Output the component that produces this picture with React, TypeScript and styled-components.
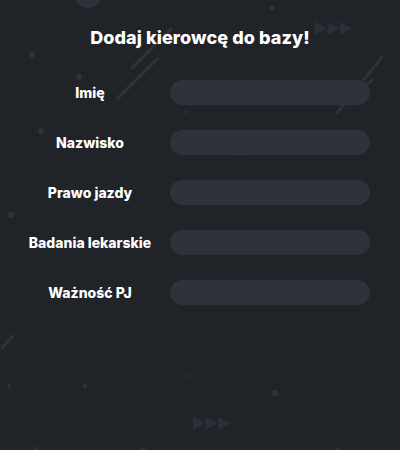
import React from "react";
import styled, { createGlobalStyle } from "styled-components";

const Global = createGlobalStyle`
  html, body { margin: 0; padding: 0; background: #202327; }
  body { font-family: Inter, "Noto Sans", sans-serif; }
`;

const Page = styled.div`
  position: relative;
  width: 400px;
  height: 450px;
  overflow: hidden;
  background: #202327;
  display: flex;
  flex-direction: column;
  align-items: stretch;
`;

const Backdrop = styled.svg`
  position: absolute;
  inset: 0;
  width: 400px;
  height: 450px;
  z-index: 0;
`;

const Title = styled.h1`
  position: relative;
  z-index: 1;
  margin: 27px 0 0;
  text-align: center;
  color: #ffffff;
  font-size: 18px;
  font-weight: 800;
  line-height: 22px;
  letter-spacing: 0.1px;
`;

const Form = styled.form`
  position: relative;
  z-index: 1;
  margin: 31px 0 0 10px;
  display: flex;
  flex-direction: column;
  gap: 25px;
`;

const Row = styled.label`
  display: grid;
  grid-template-columns: 160px 200px;
  align-items: center;
  height: 25px;
`;

const LabelText = styled.span`
  color: #ffffff;
  font-size: 14px;
  font-weight: 800;
  text-align: center;
  white-space: nowrap;
`;

const Input = styled.input`
  box-sizing: border-box;
  width: 200px;
  height: 25px;
  border: none;
  outline: none;
  border-radius: 13px;
  background: #2e333b;
  color: #fff;
  padding: 0 12px;
  font: inherit;
`;

const fields = ["Imię", "Nazwisko", "Prawo jazdy", "Badania lekarskie", "Ważność PJ"];

const dots: [number, number, number][] = [
  [88, -5, 13],
  [272, 8, 3],
  [32, 55, 3],
  [79, 77, 3],
  [186, 112, 1.5],
  [204, 102, 3],
  [41, 131, 3],
  [278, 128, 1],
  [240, 153, 3],
  [11, 215, 3],
  [9, 386, 2],
  [85, 386, 2.5],
  [187, 376, 1.5],
  [275, 393, 3],
  [362, 418, 1],
  [143, 452, 4],
  [338, 452, 4],
];

const lines: [number, number, number, number][] = [
  [132, 68, 171, 29],
  [118, 98, 158, 58],
  [337, 113, 382, 57],
  [353, 97, 372, 80],
  [2, 348, 13, 336],
];

const Triangles = ({ x, y }: { x: number; y: number }) => (
  <g fill="#2b2f37">
    {[0, 12.5, 25].map((d) => (
      <polygon key={d} points={`${x + d},${y} ${x + d + 12},${y + 6.5} ${x + d},${y + 13}`} />
    ))}
  </g>
);

export default function App() {
  return (
    <>
      <Global />
      <Page>
        <Backdrop viewBox="0 0 400 450">
          {dots.map(([cx, cy, r], i) => (
            <circle key={i} cx={cx} cy={cy} r={r} fill="#2e333b" />
          ))}
          {lines.map(([x1, y1, x2, y2], i) => (
            <line key={i} x1={x1} y1={y1} x2={x2} y2={y2} stroke="#2e333b" strokeWidth={3} strokeLinecap="round" />
          ))}
          <Triangles x={315} y={22} />
          <Triangles x={193} y={417} />
          <polygon points="38,446 32,449 38,452" fill="#2b2f37" />
        </Backdrop>
        <Title>Dodaj kierowcę do bazy!</Title>
        <Form>
          {fields.map((f) => (
            <Row key={f}>
              <LabelText>{f}</LabelText>
              <Input type="text" />
            </Row>
          ))}
        </Form>
      </Page>
    </>
  );
}
